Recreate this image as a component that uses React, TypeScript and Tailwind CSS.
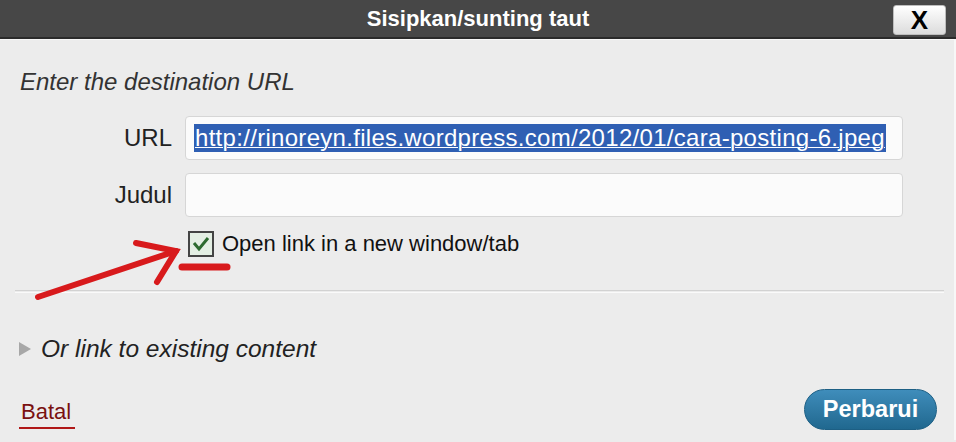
import React from "react";

export default function App() {
  const font = { fontFamily: '"Liberation Sans", Arial, sans-serif' };
  return (
    <div className="relative w-[956px] h-[442px] overflow-hidden bg-[#ececec]" style={font}>
      {/* Title bar */}
      <div className="relative h-[39px] bg-[#474747] border-b-2 border-[#2b2b2b] flex items-center justify-center">
        <span className="text-white font-bold text-[22px] leading-none">Sisipkan/sunting taut</span>
        <div className="absolute right-[10px] top-[5px] w-[53px] h-[30px] rounded-[3px] bg-gradient-to-b from-[#ffffff] to-[#dcdcdc] border border-[#bdbdbd] flex items-center justify-center">
          <span className="text-black font-bold text-[26px] leading-none">X</span>
        </div>
      </div>
      <div className="h-px bg-[#f8f8f8]" />

      {/* Body */}
      <div className="flex flex-col pl-[20px] pr-[10px] border-r-2 border-[#f7f7f7] h-[400px]">
        <div className="mt-[28px] text-[24px] leading-[28px] italic text-[#333]">Enter the destination URL</div>

        <div className="mt-[20px] flex items-center">
          <div className="w-[152px] text-right text-[24px] text-[#222]">URL</div>
          <div className="ml-[13px] w-[718px] h-[44px] bg-[#fbfbfb] border border-[#d6d6d6] rounded-[4px] flex items-center pl-[8px]">
            <span className="bg-[#2f5fb3] text-white text-[24px] leading-[28px] underline decoration-1 px-[1px] tracking-[0.3px]">http://rinoreyn.files.wordpress.com/2012/01/cara-posting-6.jpeg</span>
          </div>
        </div>

        <div className="mt-[13px] flex items-center">
          <div className="w-[152px] text-right text-[24px] text-[#222]">Judul</div>
          <div className="ml-[13px] w-[718px] h-[44px] bg-[#fbfbfb] border border-[#d6d6d6] rounded-[4px]" />
        </div>

        <div className="mt-[14px] flex items-center ml-[168px]">
          <div className="w-[26px] h-[26px] border-2 border-[#444] bg-[#e4efe4] flex items-center justify-center">
            <svg width="18" height="16" viewBox="0 0 18 16">
              <path d="M2 7 L7 13 L16 2" stroke="#2c6b2f" strokeWidth="3" fill="none" />
            </svg>
          </div>
          <span className="ml-[8px] text-[22px] leading-[26px] text-[#111]">Open link in a new window/tab</span>
        </div>

        <div className="mt-[33px] -ml-[5px] h-[3px] border-t border-[#d2d2d2] border-b border-b-[#fafafa]" />

        <div className="mt-[42px] flex items-center h-[28px]">
          <svg width="14" height="14" viewBox="0 0 14 14" className="-ml-[2px]">
            <path d="M1 0 L13 7 L1 14 Z" fill="#a7a7a7" />
          </svg>
          <span className="ml-[9px] text-[24.5px] leading-[28px] italic text-[#222]">Or link to existing content</span>
        </div>

        <div className="mt-[26px] flex items-start justify-between">
          <div className="mt-[10px] ml-[1px] flex flex-col items-start">
            <span className="text-[22px] text-[#7a1010] leading-[26px]">Batal</span>
            <div className="mt-[2px] -ml-[2px] w-[56px] h-[2px] bg-[#b01818]" />
          </div>
          <div className="mr-[7px] w-[133px] h-[41px] rounded-full bg-gradient-to-b from-[#3f8dbb] to-[#20688f] border border-[#1d5f84] flex items-center justify-center">
            <span className="text-white font-bold text-[23.5px] leading-none">Perbarui</span>
          </div>
        </div>
      </div>

      {/* Red arrow annotation */}
      <svg className="absolute left-0 top-0 pointer-events-none" width="956" height="442">
        <g stroke="#d81a1c" strokeWidth="6" strokeLinecap="round" fill="none">
          <path d="M38 297 L176 251" />
          <path d="M136 243 L176 251 L157 282" />
          <path d="M182 267 L227 267" strokeWidth="7" />
        </g>
      </svg>
    </div>
  );
}
